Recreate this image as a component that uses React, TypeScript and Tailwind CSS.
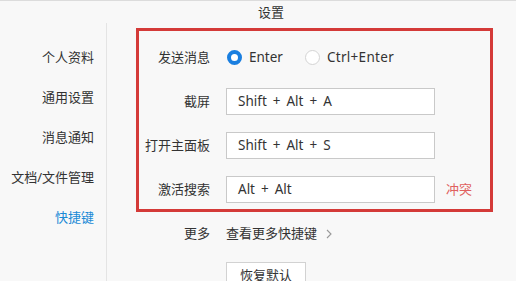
const font = {fontFamily: '"Noto Sans", "Noto Sans CJK SC", sans-serif'}

const sideItems = ['个人资料', '通用设置', '消息通知', '文档/文件管理', '快捷键']

const shortcuts = [
    {label: '截屏', value: 'Shift + Alt + A'},
    {label: '打开主面板', value: 'Shift + Alt + S'},
    {label: '激活搜索', value: 'Alt + Alt', conflict: true},
]

export default function App() {
    return (
        <div className="w-[516px] h-[281px] overflow-hidden bg-[#f8f8f8] border-t border-[#dcdcdc] text-[13px] text-[#333]" style={font}>
            {/* title */}
            <div className="h-[22px] flex items-center pl-[258px] leading-none">设置</div>

            <div className="flex h-[258px]">
                {/* sidebar */}
                <div className="w-[107px] shrink-0 border-r border-[#e4e4e4] pt-[24px] pr-[12px] flex flex-col items-end gap-[20px]">
                    {sideItems.map((item) => (
                        <div key={item}
                             className={'h-[20px] leading-[20px] ' + (item === '快捷键' ? 'text-[#1a8ad6]' : '')}>
                            {item}
                        </div>
                    ))}
                </div>

                {/* content */}
                <div className="pl-[29px] pt-[5px]">
                    <div className="w-[357px] h-[184px] border-[3px] border-[#d43a38] pt-[13px] flex flex-col gap-[17px]">
                        <div className="flex items-center h-[27px]">
                            <div className="w-[71px] text-right">发送消息</div>
                            <div className="ml-[17px] flex items-center text-[13.5px]">
                                <span className="w-[15px] h-[15px] rounded-full border-[4px] border-[#1a7fe0] bg-white"/>
                                <span className="ml-[7px]">Enter</span>
                                <span className="ml-[22px] w-[15px] h-[15px] rounded-full border border-[#d4d4d4] bg-white"/>
                                <span className="ml-[7px] tracking-[0.3px]">Ctrl+Enter</span>
                            </div>
                        </div>
                        {shortcuts.map((s) => (
                            <div key={s.label} className="flex items-center h-[27px]">
                                <div className="w-[71px] text-right">{s.label}</div>
                                <div className="ml-[16px] w-[209px] h-[27px] bg-white border border-[#c9c9c9] pl-[11px] flex items-center text-[13.5px] [word-spacing:2.5px]">
                                    {s.value}
                                </div>
                                {s.conflict && <span className="ml-[11px] text-[#e0605e]">冲突</span>}
                            </div>
                        ))}
                    </div>

                    <div className="mt-[12px] flex items-center h-[20px]">
                        <div className="w-[74px] text-right">更多</div>
                        <div className="ml-[16px] flex items-center">
                            查看更多快捷键
                            <svg className="ml-[9px]" width="6" height="10" viewBox="0 0 6 10" fill="none">
                                <path d="M1 1l4 4-4 4" stroke="#999" strokeWidth="1.1"/>
                            </svg>
                        </div>
                    </div>

                    <div className="mt-[18px] ml-[90px] w-[80px] h-[28px] bg-white border border-[#d2d2d2] flex items-center justify-center">
                        恢复默认
                    </div>
                </div>
            </div>
        </div>
    )
}
